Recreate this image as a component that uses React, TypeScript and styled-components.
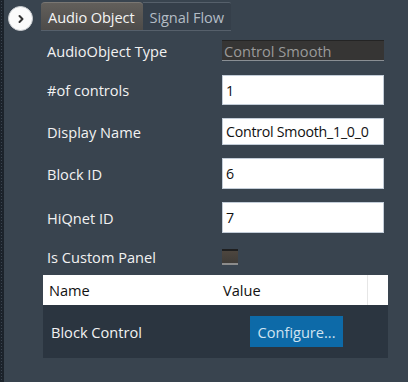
import React from 'react';
import styled, { createGlobalStyle } from 'styled-components';

const GlobalStyle = createGlobalStyle`
  html, body {
    margin: 0;
    padding: 0;
    background: #39444f;
  }
  body {
    font-family: 'Segoe UI', 'Open Sans', 'Noto Sans', sans-serif;
  }
`;

const Page = styled.div`
  display: flex;
  width: 408px;
  height: 382px;
  background: #39444f;
  overflow: hidden;
`;

const Strip = styled.div`
  width: 4px;
  flex: none;
  background-color: #1c232b;
  background-image: radial-gradient(#3a4450 0.6px, transparent 0.8px);
  background-size: 3px 3px;
`;

const Main = styled.div`
  flex: 1;
  display: flex;
  flex-direction: column;
`;

const TopBar = styled.div`
  display: flex;
  align-items: flex-start;
  height: 32px;
`;

const CircleButton = styled.button`
  width: 25px;
  height: 25px;
  margin: 6px 0 0 4px;
  padding: 0;
  border-radius: 50%;
  border: 1px solid #c9ccd0;
  background: #fbfbfb;
  display: flex;
  align-items: center;
  justify-content: center;
  cursor: pointer;
`;

const Tabs = styled.div`
  display: flex;
  margin: 2px 0 0 8px;
  border-bottom: 1px solid #56606b;
`;

const Tab = styled.div<{ $active?: boolean }>`
  height: 27px;
  display: flex;
  align-items: center;
  padding: 0 ${({ $active }) => ($active ? '8px 0 7px' : '7px 0 7px')};
  font-size: 14.6px;
  letter-spacing: -0.1px;
  color: ${({ $active }) => ($active ? '#f4f4f4' : '#b3bcc5')};
  border-top: 1px solid ${({ $active }) => ($active ? '#7a7773' : '#56606b')};
  border-radius: ${({ $active }) => ($active ? '4px 4px 0 0' : '0 2px 0 0')};
  background: ${({ $active }) =>
    $active ? 'linear-gradient(#625f5b, #4d4b49)' : '#353f4a'};
`;

const Form = styled.div`
  display: grid;
  grid-template-columns: 175px 162px;
  padding: 8px 0 0 43px;
  font-size: 14.6px;
  color: #f2f2f2;
`;

const Label = styled.div<{ $h: number; $gap: number }>`
  height: ${({ $h }) => $h}px;
  margin-top: ${({ $gap }) => $gap}px;
  display: flex;
  align-items: center;
  white-space: nowrap;
`;

const TextBox = styled.div<{ $h: number; $gap: number }>`
  box-sizing: border-box;
  height: ${({ $h }) => $h}px;
  margin-top: ${({ $gap }) => $gap}px;
  display: flex;
  align-items: center;
  padding-left: 3px;
  background: #ffffff;
  border: 1px solid #c3cdd8;
  color: #111;
  font-size: 14.2px;
  letter-spacing: -0.25px;
  white-space: nowrap;
  overflow: hidden;
`;

const ReadOnlyBox = styled.div`
  box-sizing: border-box;
  height: 21px;
  display: flex;
  align-items: center;
  padding-left: 2px;
  background: #363534;
  border-top: 1px solid #242424;
  border-bottom: 1px solid #8a8f94;
  color: #9a9a9a;
  font-size: 14.6px;
  white-space: nowrap;
`;

const CheckCell = styled.div`
  margin-top: 16px;
  height: 16px;
  display: flex;
  align-items: center;
`;

const Check = styled.div`
  box-sizing: border-box;
  width: 16px;
  height: 16px;
  background: linear-gradient(#4d463e, #3f3c38);
  border-top: 2px solid #1f1f1f;
  border-bottom: 2px solid #8c8c8c;
`;

const Table = styled.div`
  margin: 10px 0 0 39px;
  width: 345px;
`;

const HeaderRow = styled.div`
  display: grid;
  grid-template-columns: 174px 150px 1fr;
  height: 30px;
  background: #ffffff;
  color: #111;
  font-size: 14.6px;
`;

const HeaderCell = styled.div<{ $line?: boolean }>`
  display: flex;
  align-items: center;
  padding-left: 6px;
  border-left: ${({ $line }) => ($line ? '1px solid #e6e6e6' : 'none')};
`;

const BodyRow = styled.div`
  display: grid;
  grid-template-columns: 207px 1fr;
  height: 53px;
  background: #2b3540;
  color: #f2f2f2;
  font-size: 14.6px;
`;

const BodyCell = styled.div<{ $pad: number }>`
  display: flex;
  align-items: center;
  padding-left: ${({ $pad }) => $pad}px;
`;

const Configure = styled.button`
  width: 93px;
  height: 31px;
  padding: 0;
  border: none;
  background: #0d6aa8;
  color: #cfe3f1;
  font-family: inherit;
  font-size: 14.6px;
  cursor: pointer;
`;

const fields = [
  { label: '#of controls', value: '1', h: 30, gap: 14 },
  { label: 'Display Name', value: 'Control Smooth_1_0_0', h: 27, gap: 13 },
  { label: 'Block ID', value: '6', h: 31, gap: 13 },
  { label: 'HiQnet ID', value: '7', h: 31, gap: 13 },
];

export default function App() {
  return (
    <Page>
      <GlobalStyle />
      <Strip />
      <Main>
        <TopBar>
          <CircleButton aria-label="expand">
            <svg width="10" height="10" viewBox="0 0 10 10">
              <path d="M3.5 2 L6.5 5 L3.5 8" fill="none" stroke="#333" strokeWidth="2" strokeLinecap="round" strokeLinejoin="round" />
            </svg>
          </CircleButton>
          <Tabs>
            <Tab $active>Audio Object</Tab>
            <Tab>Signal Flow</Tab>
          </Tabs>
        </TopBar>
        <Form>
          <Label $h={21} $gap={0}>AudioObject Type</Label>
          <ReadOnlyBox>Control Smooth</ReadOnlyBox>
          {fields.map((f) => (
            <React.Fragment key={f.label}>
              <Label $h={f.h} $gap={f.gap}>{f.label}</Label>
              <TextBox $h={f.h} $gap={f.gap}>{f.value}</TextBox>
            </React.Fragment>
          ))}
          <Label $h={16} $gap={16}>Is Custom Panel</Label>
          <CheckCell>
            <Check />
          </CheckCell>
        </Form>
        <Table>
          <HeaderRow>
            <HeaderCell>Name</HeaderCell>
            <HeaderCell>Value</HeaderCell>
            <HeaderCell $line />
          </HeaderRow>
          <BodyRow>
            <BodyCell $pad={8}>Block Control</BodyCell>
            <BodyCell $pad={0}>
              <Configure>Configure...</Configure>
            </BodyCell>
          </BodyRow>
        </Table>
      </Main>
    </Page>
  );
}
